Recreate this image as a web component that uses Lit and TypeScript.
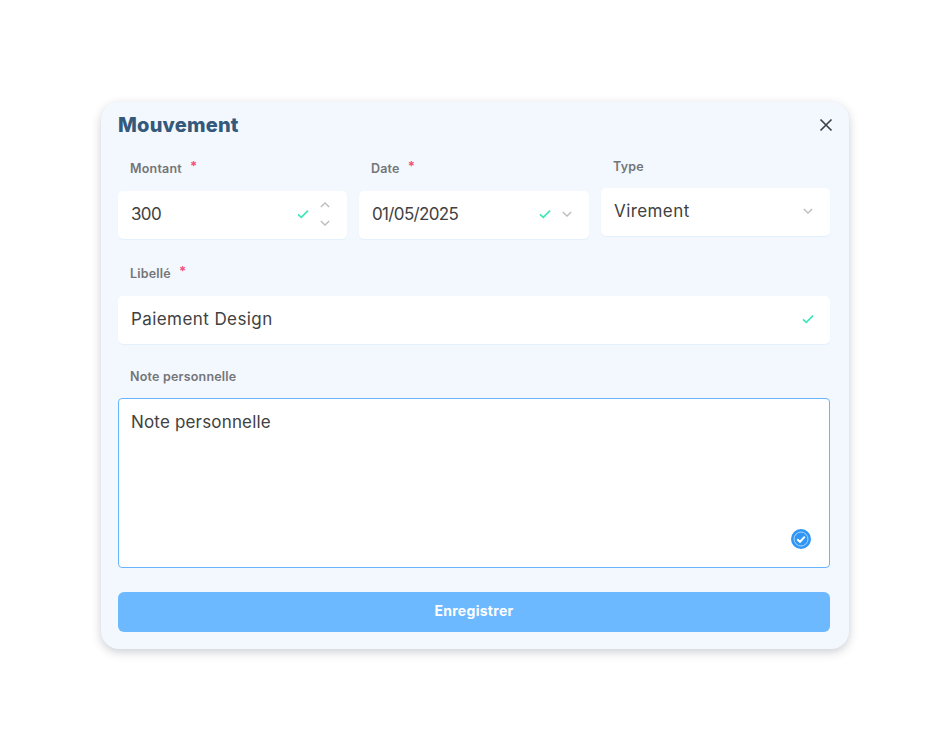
import { LitElement, html, css } from "lit";
import { customElement } from "lit/decorators.js";

const check = html`<svg class="check" width="14" height="14" viewBox="0 0 14 14" fill="none"><path d="M2 7.4 L5.3 10.4 L12 3.6" stroke="#3ce6b9" stroke-width="1.6"/></svg>`;
const chevDown = html`<svg class="chev" width="12" height="12" viewBox="0 0 12 12" fill="none"><path d="M1.8 4 L6 8 L10.2 4" stroke="#bdbdbd" stroke-width="1.4"/></svg>`;
const chevUp = html`<svg class="chev" width="12" height="12" viewBox="0 0 12 12" fill="none"><path d="M1.8 8 L6 4 L10.2 8" stroke="#bdbdbd" stroke-width="1.4"/></svg>`;

@customElement("app-root")
export class AppRoot extends LitElement {
  static styles = css`
    :host { display: block; height: 750px; background: #fff; font-family: Inter, "Liberation Sans", sans-serif; box-sizing: border-box; padding: 102px 101px 0; }
    * { box-sizing: border-box; }
    .card { width: 748px; height: 547px; background: #f3f8fe; border-radius: 18px; box-shadow: 0 3px 10px rgba(50,60,80,.25); padding: 0 19px 0 17px; display: flex; flex-direction: column; }
    .head { height: 47px; display: flex; align-items: center; justify-content: space-between; padding-bottom: 2px; }
    h1 { margin: 1px 0 0; font-size: 20px; font-weight: 800; color: #34597b; letter-spacing: 0.2px; }
    .close { margin-right: -4px; display: block; }
    .row { display: grid; grid-template-columns: 229px 230px 229px; column-gap: 12px; width: 712px; align-items: start; }
    .label { display: flex; align-items: flex-start; gap: 8px; padding: 10px 0 0 12px; height: 42px; font-size: 12.5px; font-weight: 600; color: #737577; line-height: 20px; letter-spacing: 0.2px; }
    .label.plain { height: 39px; padding-top: 8px; }
    .star { color: #f7507a; font-size: 13px; line-height: 16px; font-weight: 700; margin-top: -1px; }
    .input { height: 48px; background: #fff; border-radius: 5px; box-shadow: 0 1px 1px #e3effc; display: flex; align-items: center; padding: 0 16px 2px 13px; font-size: 17px; color: #414141; letter-spacing: 0.42px; }
    .val { flex: 1; }
    .num { letter-spacing: -0.65px; }
    .icons { display: flex; align-items: center; gap: 9px; }
    .spin { display: flex; flex-direction: column; gap: 6px; }
    .solo { margin-right: -1px; }
    .lab3 { height: 54px; padding-top: 23px; }
    .area { position: relative; height: 170px; background: #fff; border: 1px solid #69b5fb; border-radius: 4px; padding: 12px 12px; font-size: 17px; color: #414141; letter-spacing: 0.17px; line-height: 22px; width: 712px; }
    .badge { position: absolute; right: 18px; bottom: 18px; display: block; }
    .btn { margin-top: 24px; height: 40px; width: 712px; border: none; border-radius: 6px; background: #6cb9ff; color: #fff; font: 700 14px Inter, "Liberation Sans", sans-serif; letter-spacing: 0.3px; padding: 0 0 3px; }
    .wide { width: 712px; }
    .libelle { margin-top: 15px; }
  `;

  render() {
    return html`<div class="card">
      <div class="head">
        <h1>Mouvement</h1>
        <svg class="close" width="16" height="16" viewBox="0 0 16 16" fill="none"><path d="M2.5 2.5 L13.5 13.5 M13.5 2.5 L2.5 13.5" stroke="#3d4247" stroke-width="1.7"/></svg>
      </div>
      <div class="row">
        <div>
          <div class="label">Montant <span class="star">*</span></div>
          <div class="input"><span class="val num">300</span><span class="icons">${check}<span class="spin">${chevUp}${chevDown}</span></span></div>
        </div>
        <div>
          <div class="label">Date <span class="star">*</span></div>
          <div class="input"><span class="val num">01/05/2025</span><span class="icons">${check}${chevDown}</span></div>
        </div>
        <div>
          <div class="label plain">Type</div>
          <div class="input"><span class="val">Virement</span><span class="icons">${chevDown}</span></div>
        </div>
      </div>
      <div class="wide libelle">
        <div class="label">Libellé <span class="star">*</span></div>
        <div class="input"><span class="val">Paiement Design</span><span class="icons solo">${check}</span></div>
      </div>
      <div class="wide">
        <div class="label lab3">Note personnelle</div>
        <div class="area">Note personnelle
          <svg class="badge" width="20" height="20" viewBox="0 0 20 20" fill="none">
            <circle cx="10" cy="10" r="10" fill="#2f96f5"/>
            <circle cx="10" cy="10" r="7" fill="#2f96f5" stroke="#a9d5fb" stroke-width="1"/>
            <path d="M6.2 10.2 L9 12.8 L13.8 7.6" stroke="#fff" stroke-width="2"/>
          </svg>
        </div>
      </div>
      <button class="btn">Enregistrer</button>
    </div>`;
  }
}
